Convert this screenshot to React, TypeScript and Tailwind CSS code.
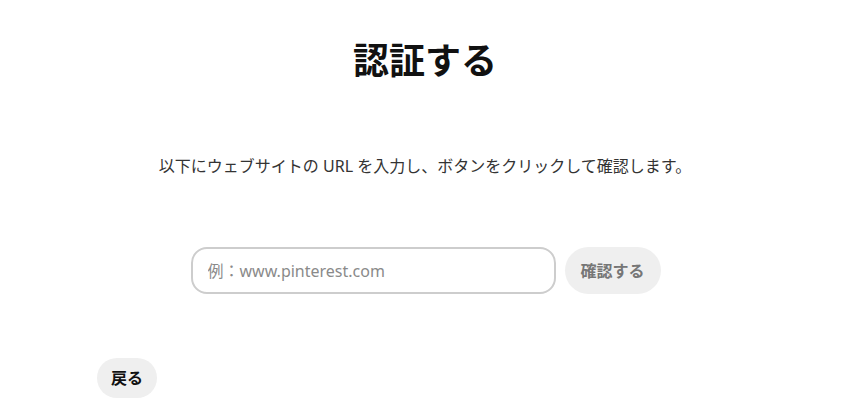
export default function App() {
  return (
    <div
      className="w-[850px] h-[415px] bg-white flex flex-col px-[97px] text-[#111111]"
      style={{ fontFamily: '"Noto Sans", "Noto Sans CJK JP", sans-serif' }}
    >
      {/* Title */}
      <h1 className="mt-[38px] h-[46px] flex items-center justify-center text-[36px] font-bold leading-none">
        認証する
      </h1>

      {/* Description */}
      <p className="mt-[70px] text-center text-[16px] leading-[24px] text-[#333333]">
        以下にウェブサイトの URL を入力し、ボタンをクリックして確認します。
      </p>

      {/* URL form */}
      <div className="mt-[69px] flex items-center justify-center gap-[9px] pl-[1px]">
        <input
          type="text"
          placeholder="例：www.pinterest.com"
          className="w-[365px] h-[47px] rounded-[16px] border-2 border-[#cdcdcd] px-[15px] text-[16px] outline-none placeholder:text-[#8a8a8a]"
        />
        <button className="w-[96px] h-[47px] rounded-full bg-[#efefef] text-[16px] font-bold text-[#767676]">
          確認する
        </button>
      </div>

      {/* Back */}
      <div className="mt-[64px]">
        <button className="w-[60px] h-[40px] rounded-full bg-[#efefef] text-[16px] font-bold text-[#111111]">
          戻る
        </button>
      </div>
    </div>
  );
}
